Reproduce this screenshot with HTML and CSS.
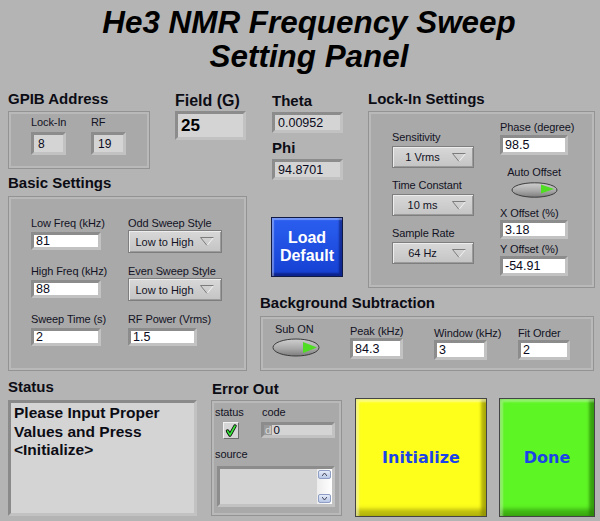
FILE: index.html
```html
<!DOCTYPE html>
<html>

<head>
    <title>He3 NMR Frequency Sweep</title>
    <link rel="stylesheet" href="styles.css">
</head>

<body>
    <div class="panel">
        <div class="title">He3 NMR Frequency Sweep<br>Setting Panel</div>

        <div class="upper">
            <div class="left-col">
                <div class="top-pair">
                    <section class="gpib">
                        <h2>GPIB Address</h2>
                        <div class="frame gpib-frame">
                            <div class="gpib-item">
                                <div class="lbl">Lock-In</div>
                                <div class="ind gpib-box">8</div>
                            </div>
                            <div class="gpib-item">
                                <div class="lbl">RF</div>
                                <div class="ind gpib-box">19</div>
                            </div>
                        </div>
                    </section>
                    <section class="field">
                        <h2 class="field-head">Field (G)</h2>
                        <div class="ind field-box">25</div>
                    </section>
                </div>

                <section class="basic">
                    <h2>Basic Settings</h2>
                    <div class="frame basic-frame">
                        <div>
                            <div class="lbl">Low Freq (kHz)</div>
                            <div class="ctl basic-num">81</div>
                        </div>
                        <div>
                            <div class="lbl">Odd Sweep Style</div>
                            <div class="ring basic-ring"><span>Low to High</span>
                                <svg class="arrow" width="14" height="9" viewBox="0 0 14 9"><path d="M13.5 0.5 L7 8.5" stroke="#f2f2f2"/><path d="M7 8.5 L0.5 0.5 L13.5 0.5" fill="none" stroke="#7c7c7c"/></svg>
                            </div>
                        </div>
                        <div>
                            <div class="lbl">High Freq (kHz)</div>
                            <div class="ctl basic-num">88</div>
                        </div>
                        <div>
                            <div class="lbl">Even Sweep Style</div>
                            <div class="ring basic-ring"><span>Low to High</span>
                                <svg class="arrow" width="14" height="9" viewBox="0 0 14 9"><path d="M13.5 0.5 L7 8.5" stroke="#f2f2f2"/><path d="M7 8.5 L0.5 0.5 L13.5 0.5" fill="none" stroke="#7c7c7c"/></svg>
                            </div>
                        </div>
                        <div>
                            <div class="lbl">Sweep Time (s)</div>
                            <div class="ctl basic-num">2</div>
                        </div>
                        <div>
                            <div class="lbl">RF Power (Vrms)</div>
                            <div class="ctl basic-num rf">1.5</div>
                        </div>
                    </div>
                </section>
            </div>

            <div class="right-col">
                <div class="right-top">
                    <div class="angles">
                        <h2 class="theta-head">Theta</h2>
                        <div class="ind angle-box">0.00952</div>
                        <h2 class="phi-head">Phi</h2>
                        <div class="ind angle-box">94.8701</div>
                        <div class="load-btn">Load<br>Default</div>
                    </div>

                    <section class="lockin">
                        <h2>Lock-In Settings</h2>
                        <div class="frame lockin-frame">
                            <div class="lk-left">
                                <div class="lk-item">
                                    <div class="lbl">Sensitivity</div>
                                    <div class="ring lk-ring"><span>1 Vrms</span>
                                        <svg class="arrow" width="14" height="9" viewBox="0 0 14 9"><path d="M13.5 0.5 L7 8.5" stroke="#f2f2f2"/><path d="M7 8.5 L0.5 0.5 L13.5 0.5" fill="none" stroke="#7c7c7c"/></svg>
                                    </div>
                                </div>
                                <div class="lk-item">
                                    <div class="lbl">Time Constant</div>
                                    <div class="ring lk-ring"><span>10 ms</span>
                                        <svg class="arrow" width="14" height="9" viewBox="0 0 14 9"><path d="M13.5 0.5 L7 8.5" stroke="#f2f2f2"/><path d="M7 8.5 L0.5 0.5 L13.5 0.5" fill="none" stroke="#7c7c7c"/></svg>
                                    </div>
                                </div>
                                <div class="lk-item">
                                    <div class="lbl">Sample Rate</div>
                                    <div class="ring lk-ring"><span>64 Hz</span>
                                        <svg class="arrow" width="14" height="9" viewBox="0 0 14 9"><path d="M13.5 0.5 L7 8.5" stroke="#f2f2f2"/><path d="M7 8.5 L0.5 0.5 L13.5 0.5" fill="none" stroke="#7c7c7c"/></svg>
                                    </div>
                                </div>
                            </div>
                            <div class="lk-right">
                                <div class="lbl">Phase (degree)</div>
                                <div class="ctl phase-box">98.5</div>
                                <div class="auto">
                                    <div class="lbl">Auto Offset</div>
                                    <svg class="led" width="47" height="16" viewBox="0 0 47 16">
                                        <defs>
                                            <linearGradient id="ledA" x1="0" y1="0" x2="0" y2="1">
                                                <stop offset="0" stop-color="#cfcfcf"/>
                                                <stop offset="0.55" stop-color="#a9a9a9"/>
                                                <stop offset="1" stop-color="#7d7d7d"/>
                                            </linearGradient>
                                        </defs>
                                        <ellipse cx="23.5" cy="8" rx="22.5" ry="7.2" fill="url(#ledA)" stroke="#3c3c3c"/>
                                        <polygon points="30,2.5 43,7 30,11.5" fill="#4fdc22"/>
                                    </svg>
                                </div>
                                <div class="lbl xoff-lbl">X Offset (%)</div>
                                <div class="ctl off-box">3.18</div>
                                <div class="lbl yoff-lbl">Y Offset (%)</div>
                                <div class="ctl off-box tall">-54.91</div>
                            </div>
                        </div>
                    </section>
                </div>

                <section class="bgsub">
                    <h2>Background Subtraction</h2>
                    <div class="frame bg-frame">
                        <div class="sub-on">
                            <div class="lbl">Sub ON</div>
                            <svg class="led-big" width="48" height="19" viewBox="0 0 48 19">
                                <defs>
                                    <linearGradient id="ledB" x1="0" y1="0" x2="0" y2="1">
                                        <stop offset="0" stop-color="#cfcfcf"/>
                                        <stop offset="0.55" stop-color="#a9a9a9"/>
                                        <stop offset="1" stop-color="#7d7d7d"/>
                                    </linearGradient>
                                </defs>
                                <ellipse cx="24" cy="9.5" rx="23" ry="8.5" fill="url(#ledB)" stroke="#3c3c3c"/>
                                <polygon points="31,4 45,9.5 31,15" fill="#4fdc22"/>
                            </svg>
                        </div>
                        <div class="peak">
                            <div class="lbl">Peak (kHz)</div>
                            <div class="ctl bg-box peak-box">84.3</div>
                        </div>
                        <div class="win">
                            <div class="lbl">Window (kHz)</div>
                            <div class="ctl bg-box">3</div>
                        </div>
                        <div class="win">
                            <div class="lbl">Fit Order</div>
                            <div class="ctl bg-box">2</div>
                        </div>
                    </div>
                </section>
            </div>
        </div>

        <div class="lower">
            <section class="status-sec">
                <h2>Status</h2>
                <div class="status-box">Please Input Proper<br>Values and Press<br>&lt;Initialize&gt;</div>
            </section>

            <section class="err-sec">
                <h2>Error Out</h2>
                <div class="frame err-frame">
                    <div class="err-top">
                        <div class="err-status">
                            <div class="lbl">status</div>
                            <div class="check">
                                <svg width="14" height="15" viewBox="0 0 14 15">
                                    <path d="M3.5 8 L6 12 L11 3" fill="none" stroke="#0d0d0d" stroke-width="3.4" stroke-linecap="round" stroke-linejoin="round"/>
                                    <path d="M3.5 8 L6 12 L11 3" fill="none" stroke="#38e83a" stroke-width="1.6" stroke-linecap="round" stroke-linejoin="round"/>
                                </svg>
                            </div>
                        </div>
                        <div class="err-code">
                            <div class="lbl">code</div>
                            <div class="ind code-box"><span class="radix">d</span>0</div>
                        </div>
                    </div>
                    <div class="lbl source-lbl">source</div>
                    <div class="ind source-box">
                        <div class="scroll">
                            <div class="sbtn"><svg width="5" height="3" viewBox="0 0 5 3"><path d="M0 3 L2.5 0 L5 3" fill="none" stroke="#445"/></svg></div>
                            <div class="sbtn"><svg width="5" height="3" viewBox="0 0 5 3"><path d="M0 0 L2.5 3 L5 0" fill="none" stroke="#445"/></svg></div>
                        </div>
                    </div>
                </div>
            </section>

            <div class="big-btn init-btn">Initialize</div>
            <div class="big-btn done-btn">Done</div>
        </div>
    </div>
</body>

</html>
```

FILE: styles.css
```css
* {
    margin: 0;
    padding: 0;
    box-sizing: border-box;
}

body {
    background-color: #b4b4b4;
    font-family: "Liberation Sans", Arial, sans-serif;
    color: #121224;
}

.panel {
    width: 600px;
    height: 521px;
    overflow: hidden;
}

.title {
    height: 90px;
    padding-top: 6px;
    padding-left: 18px;
    text-align: center;
    font: italic bold 31.4px/34px "Liberation Sans", Arial, sans-serif;
    color: #000;
}

h2 {
    font-size: 15px;
    line-height: 18px;
    font-weight: bold;
    color: #0c0c14;
    white-space: nowrap;
}

.lbl {
    font-size: 11px;
    line-height: 13px;
    letter-spacing: -0.1px;
    white-space: nowrap;
}

/* recessed group frames */
.frame {
    background-color: #a9a9a9;
    border: 1px solid #939393;
    box-shadow: inset 0 0 0 2px #b9b9b9;
}

/* white controls and gray indicators */
.ctl,
.ind {
    display: flex;
    align-items: center;
    font-size: 12.5px;
    padding-left: 2px;
    border: 3px solid;
    border-color: #8c8c8c #c2c2c2 #c2c2c2 #8c8c8c;
    color: #0a0a20;
    white-space: nowrap;
}

.ctl {
    background-color: #ffffff;
}

.ind {
    background-color: #d4d4d4;
}

.ring {
    display: flex;
    align-items: center;
    font-size: 11px;
    border: 1px solid #7e7e7e;
    background: linear-gradient(#d8d8d8, #c4c4c4);
    box-shadow: inset 1px 1px 0 #ededed, inset -1px -1px 0 #9b9b9b;
    white-space: nowrap;
}

.ring span {
    flex: 1;
    text-align: center;
}

.ring .arrow {
    margin-right: 7px;
}

/* layout */
.upper {
    display: flex;
    height: 288px;
}

.left-col {
    margin-left: 8px;
    width: 239px;
}

.top-pair {
    display: flex;
}

.gpib {
    width: 142px;
}

.gpib-frame {
    margin-top: 3px;
    height: 58px;
    display: flex;
    gap: 25px;
    padding: 4px 0 0 22px;
}

.gpib-item {
    width: 35px;
}

.gpib-box {
    margin-top: 3px;
    height: 23px;
    padding-left: 4px;
    font-size: 12px;
}

.field {
    margin-left: 25px;
    width: 71px;
}

.field-head {
    font-size: 16px;
    margin-top: 2px;
    margin-bottom: 1px;
}

.field-box {
    height: 29px;
    font-size: 17px;
    font-weight: bold;
    padding-left: 3px;
    color: #000;
}

.basic {
    margin-top: 5px;
}

.basic-frame {
    margin-top: 4px;
    height: 175px;
    padding: 20px 0 0 22px;
    display: grid;
    grid-template-columns: 97px 1fr;
    grid-auto-rows: 48px;
}

.basic-num {
    margin-top: 2px;
    width: 70px;
    height: 18px;
}

.basic-num.rf {
    width: 69px;
}

.basic-ring {
    width: 94px;
    height: 23px;
}

.right-col {
    margin-left: 13px;
    width: 335px;
}

.right-top {
    display: flex;
}

.angles {
    margin-left: 12px;
    width: 71px;
}

.theta-head {
    margin-top: 2px;
}

.angle-box {
    margin-top: 2px;
    height: 21px;
    padding-left: 3px;
}

.phi-head {
    margin-top: 6px;
}

.load-btn {
    margin-top: 37px;
    margin-left: -1px;
    width: 72px;
    height: 60px;
    display: flex;
    align-items: center;
    justify-content: center;
    text-align: center;
    font-size: 16px;
    line-height: 18px;
    font-weight: bold;
    color: #ffffff;
    background: linear-gradient(#2b5ff0, #1540d2);
    border: 1px solid #101a44;
    box-shadow: inset 2px 2px 1px rgba(255, 255, 255, 0.35), inset -3px -3px 2px rgba(0, 0, 60, 0.45);
}

.lockin {
    margin-left: 25px;
    width: 227px;
}

.lockin-frame {
    margin-top: 3px;
    height: 177px;
    display: flex;
    padding-left: 23px;
}

.lk-left {
    width: 108px;
    padding-top: 19px;
}

.lk-item + .lk-item {
    margin-top: 11px;
}

.lk-ring {
    margin-top: 2px;
    width: 82px;
    height: 22px;
}

.lk-right {
    width: 68px;
    padding-top: 9px;
}

.phase-box {
    margin-top: 1px;
    width: 68px;
    height: 20px;
}

.auto {
    margin-top: 11px;
    text-align: center;
}

.led {
    display: block;
    margin: 3px auto 0;
}

.xoff-lbl {
    margin-top: 9px;
}

.yoff-lbl {
    margin-top: 4px;
}

.off-box {
    width: 68px;
    height: 19px;
}

.off-box.tall {
    height: 20px;
}

.bgsub {
    margin-top: 6px;
}

.bg-frame {
    margin-top: 4px;
    width: 334px;
    height: 55px;
    display: flex;
    align-items: flex-start;
    padding-left: 11px;
}

.sub-on {
    width: 48px;
    margin-top: 6px;
}

.sub-on .lbl {
    padding-left: 3px;
}

.led-big {
    display: block;
    margin-top: 2px;
}

.peak {
    width: 53px;
    margin-left: 30px;
    margin-top: 8px;
}

.win {
    width: 53px;
    margin-left: 31px;
    margin-top: 10px;
}

.bg-box {
    width: 53px;
    height: 20px;
}

.peak-box {
    height: 21px;
}

.win:last-child .bg-box {
    width: 52px;
}

/* lower row */
.lower {
    display: flex;
    align-items: flex-start;
}

.status-sec {
    margin-left: 8px;
    width: 189px;
}

.status-box {
    margin-top: 4px;
    height: 116px;
    background-color: #d4d4d4;
    border: 3px solid;
    border-color: #8a8a8a #c2c2c2 #c2c2c2 #8a8a8a;
    padding: 1px 3px;
    font-size: 15.5px;
    line-height: 18.5px;
    font-weight: bold;
    color: #0c0c14;
    white-space: nowrap;
}

.err-sec {
    margin-left: 14px;
    width: 131px;
}

.err-sec h2 {
    margin-top: 2px;
    padding-left: 1px;
}

.err-frame {
    margin-top: 2px;
    height: 116px;
    padding: 5px 0 0 3px;
}

.err-top {
    display: flex;
}

.err-status {
    width: 47px;
}

.check {
    margin: 3px 0 0 8px;
    width: 16px;
    height: 17px;
    background-color: #d6d6d6;
    border: 1px solid;
    border-color: #f2f2f2 #6e6e6e #6e6e6e #f2f2f2;
    display: flex;
    align-items: center;
    justify-content: center;
}

.code-box {
    margin: 3px 0 0 -1px;
    width: 74px;
    height: 16px;
    padding-left: 0;
    font-size: 11.5px;
}

.radix {
    background-color: #9a9a9a;
    color: #d8d8d8;
    padding: 0 1px;
    margin-right: 1px;
    height: 100%;
    display: flex;
    align-items: center;
}

.source-lbl {
    margin-top: 9px;
}

.source-box {
    margin: 5px 0 0 2px;
    width: 118px;
    height: 41px;
    padding-left: 0;
    justify-content: flex-end;
    align-items: stretch;
}

.scroll {
    width: 15px;
    background: linear-gradient(90deg, #ececec, #ffffff);
    display: flex;
    flex-direction: column;
    justify-content: space-between;
    padding: 1px;
}

.sbtn {
    height: 9px;
    border: 1px solid #8e9ec4;
    border-radius: 2px;
    background: linear-gradient(#e4ebf8, #b8c7e6);
    display: flex;
    align-items: center;
    justify-content: center;
}

.big-btn {
    margin-top: 20px;
    height: 119px;
    display: flex;
    align-items: center;
    justify-content: center;
    font: bold 16px "DejaVu Sans", Verdana, sans-serif;
    color: #1a44e8;
    border: 1px solid #444444;
}

.init-btn {
    margin-left: 13px;
    width: 132px;
    background-color: #ffff1c;
    box-shadow: inset 3px 3px 2px rgba(255, 255, 255, 0.45), inset -5px 0 3px rgba(120, 120, 0, 0.55), inset 0 -7px 4px rgba(120, 120, 0, 0.5);
}

.done-btn {
    margin-left: 12px;
    width: 96px;
    background-color: #5ef524;
    box-shadow: inset 3px 3px 2px rgba(255, 255, 255, 0.35), inset -5px 0 3px rgba(30, 110, 0, 0.55), inset 0 -7px 4px rgba(30, 110, 0, 0.5);
}
```
